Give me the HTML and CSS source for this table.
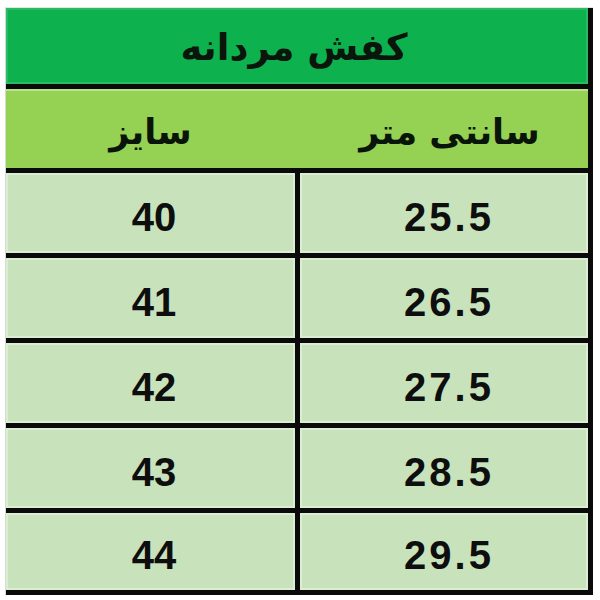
FILE: index.html
```html
<!DOCTYPE html>
<html lang="fa">
<head>
<meta charset="utf-8">
<title>کفش مردانه</title>
<link rel="stylesheet" href="styles.css">
</head>
<body>
<div class="sheet">
  <div class="title" dir="rtl">کفش مردانه</div>
  <div class="head">
    <span class="label" dir="rtl">سایز</span>
    <span class="label" dir="rtl">سانتی متر</span>
  </div>
  <div class="cell">40</div><div class="cell cm">25.5</div>
  <div class="cell">41</div><div class="cell cm">26.5</div>
  <div class="cell">42</div><div class="cell cm">27.5</div>
  <div class="cell">43</div><div class="cell cm">28.5</div>
  <div class="cell">44</div><div class="cell cm">29.5</div>
</div>
</body>
</html>
```
FILE: styles.css
```css
html, body {
  margin: 0;
  padding: 0;
  background: #ffffff;
}

.sheet {
  margin: 7px 0 0 5px;
  width: 588px;
  box-sizing: border-box;
  display: grid;
  grid-template-columns: 289px 288px;
  grid-template-rows: 76px 79px 80px 80px 80px 80px 77px;
  gap: 5px;
  padding: 0 5px 5px 0;
  background: #0a0a0a;
  border-left: 1px solid #d3dcd0;
  border-top: 1px solid #dfe8dc;
}

.title {
  grid-column: 1 / 3;
  background: #0db14e;
  display: flex;
  align-items: center;
  justify-content: center;
  font-family: "DejaVu Sans", sans-serif;
  font-weight: bold;
  font-size: 37px;
  color: #0a150c;
  padding: 2px 6px 0 0;
  box-shadow: inset 0 0 0 2px rgba(255, 255, 255, 0.12);
}

.head {
  grid-column: 1 / 3;
  background: #95d152;
  display: flex;
  box-shadow: inset 0 2px 0 rgba(255, 255, 255, 0.35);
}

.label {
  flex: 1;
  display: flex;
  align-items: center;
  justify-content: center;
  font-family: "DejaVu Sans", sans-serif;
  font-weight: bold;
  font-size: 35px;
  color: #0a150a;
  padding-top: 6px;
}

.label:first-child {
  padding-left: 6px;
}

.label:last-child {
  padding-left: 22px;
}

.cell {
  background: #c8e3bb;
  display: flex;
  align-items: center;
  justify-content: center;
  font-family: "Liberation Sans", Arial, sans-serif;
  font-weight: bold;
  font-size: 40px;
  color: #0e0e0e;
  padding: 8px 0 0 7px;
  box-shadow: inset 0 0 0 2px rgba(255, 255, 255, 0.35);
}

.cm {
  letter-spacing: 3px;
  padding-left: 10px;
}
```
